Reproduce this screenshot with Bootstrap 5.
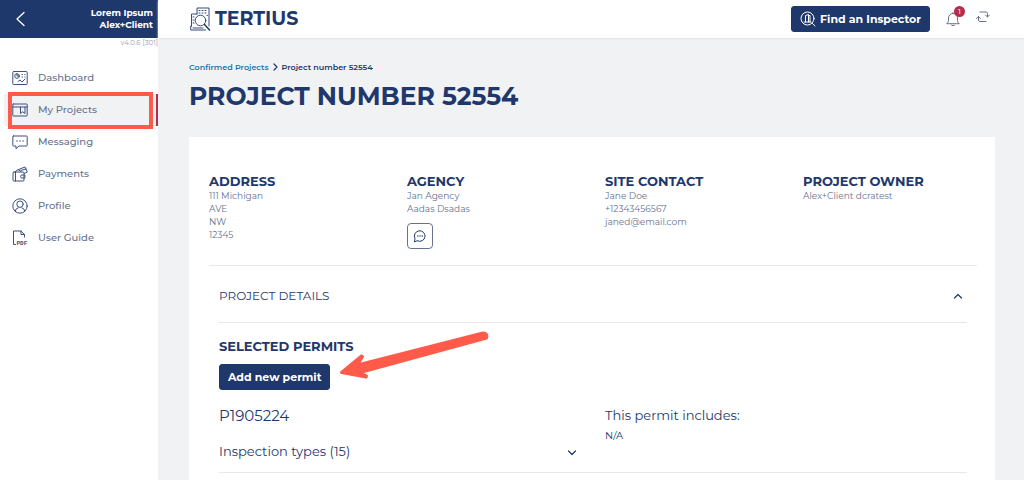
<!DOCTYPE html>
<html lang="en">
<head>
<meta charset="utf-8">
<meta name="viewport" content="width=device-width, initial-scale=1">
<title>Tertius - Project number 52554</title>
<link href="https://cdn.jsdelivr.net/npm/bootstrap@5.3.0/dist/css/bootstrap.min.css" rel="stylesheet">
<style>
:root { --navy: #1f386b; --slate: #66728f; --line: #e6e8eb; --coral: #ff5a4a; --canvas: #f1f2f4; }
body { font-family: Montserrat, Inter, sans-serif; color: var(--navy); background: var(--canvas); font-size: 12px; line-height: 16px; }
svg { fill: none; stroke: currentColor; stroke-linecap: round; stroke-linejoin: round; display: block; flex-shrink: 0; }
svg text { stroke: none; fill: currentColor; }
.sidebar { width: 158px; flex-shrink: 0; }
.account { background: var(--navy); height: 38px; font-size: 9px; line-height: 12px; font-weight: 700; padding: 0 5px 0 14px; }
.account button, .plain { background: none; border: 0; padding: 0; color: inherit; }
.version { font-size: 7px; line-height: 10px; color: #98a1b5; }
.menu { padding-top: 14px; }
.menu .nav-link { display: flex; align-items: center; gap: 10px; height: 32px; margin-left: 4px; padding: 0 0 0 8px; font-size: 10px; font-weight: 500; color: var(--slate); }
.menu svg { color: #3b5180; }
.menu .active { background: var(--canvas); border-right: 2px solid #b92b4b; position: relative; }
.callout-box { position: absolute; inset: -2px 3px -3px 4px; border: 4px solid var(--coral); }
.topbar { height: 38px; padding: 0 34px 0 32px; box-shadow: 0 1px 2px #dfe2e5; }
.brand { font-size: 19px; line-height: 24px; font-weight: 700; color: var(--navy); }
.btn-navy { --bs-btn-bg: var(--navy); --bs-btn-color: #fff; --bs-btn-hover-bg: #162a54; --bs-btn-hover-color: #fff; --bs-btn-font-weight: 700; --bs-btn-font-size: 11px; --bs-btn-line-height: 16px; --bs-btn-padding-x: 8px; --bs-btn-padding-y: 4px; --bs-btn-border-radius: 3px; --bs-btn-border-color: var(--navy); }
.alerts { color: var(--slate); margin-left: 16px; }
.count { position: absolute; top: -5px; left: 8px; width: 11px; height: 11px; border-radius: 50%; background: #b92b4b; color: #fff; font-size: 8px; line-height: 11px; text-align: center; }
.page { padding: 23px 29px 0 31px; }
.crumbs { font-size: 8px; line-height: 12px; font-weight: 600; gap: 4px; }
.crumbs a { color: #1c75a8; }
h1 { font-size: 25px; line-height: 32px; font-weight: 700; margin: 7px 0 25px; }
.sheet { padding: 36px 18px 0 20px; }
h2 { font-size: 13px; line-height: 16px; font-weight: 700; margin: 0; }
.facts { font-size: 9px; line-height: 13px; color: var(--slate); min-height: 92px; }
.facts h2 { color: var(--navy); }
.chat-btn { width: 26px; height: 26px; border: 1px solid var(--slate); border-radius: 4px; color: var(--navy); background: #fff; }
.rule { border-top: 1px solid var(--line); }
.details { height: 56px; font-size: 12px; }
.inset { margin: 0 10px; }
.permits-head { padding-top: 15px; }
.add-permit { margin-top: 10px; }
.permit { padding-top: 16px; padding-bottom: 12px; }
.permit-side { padding-left: 22px; padding-right: 16px; }
.big { font-size: 15px; line-height: 20px; margin-bottom: 16px; }
.mid { font-size: 13px; line-height: 18px; }
.small-note { font-size: 10px; }
.arrow { position: absolute; left: 116px; top: -36px; color: var(--coral); }
</style>
</head>
<body>
<div class="d-flex min-vh-100">
  <aside class="sidebar bg-white">
    <div class="account d-flex align-items-center justify-content-between text-white text-end">
      <button type="button" aria-label="Collapse menu"><svg width="12" height="16" viewBox="0 0 12 16" stroke-width="1.3"><path d="M10 1.500 3 8l7 6.500"/></svg></button>
      <div>Lorem Ipsum<br>Alex+Client</div>
    </div>
    <div class="version text-end">v4.0.6 [301]</div>
    <nav class="menu nav flex-column flex-nowrap">
      <a class="nav-link" href="#"><svg width="16" height="16" viewBox="0 0 16 16"><rect x=".8" y="1.500" width="14.400" height="13" rx="1"/><circle cx="5" cy="6" r="2.300"/><path d="M5 3.700V6h2.300M10 4.500h.5M12.800 4.500h.2M10 7h.5M12.800 7h.2M6 11.500l2-1.500 2 2 3-3"/></svg>Dashboard</a>
      <a class="nav-link active" href="#"><svg width="16" height="16" viewBox="0 0 16 16"><rect x=".8" y="2" width="14.400" height="12" rx=".5"/><path d="M.8 5h14.400M8.500 5v6.500l2.200-1.700 2.300 1.700V5"/></svg>My Projects<span class="callout-box"></span></a>
      <a class="nav-link" href="#"><svg width="16" height="16" viewBox="0 0 16 16"><path d="M1.500 2h13q.7 0 .7.700v8.600q0 .7-.7.700H7l-3 2.700V12H1.500q-.7 0-.7-.7V2.700q0-.7.700-.7z"/><path d="M5 7h.1M8 7h.1M11 7h.1" stroke-width="1.300"/></svg>Messaging</a>
      <a class="nav-link" href="#"><svg width="16" height="16" viewBox="0 0 16 16"><path d="M2 6h9q1 0 1 1v7q0 1-1 1H2q-1 0-1-1V7q0-1 1-1zM3.500 6v9M12.500 9H10a1.500 1.500 0 0 0 0 3h2.500zM3.500 5.500 6 3.500l3 2M6.500 3.500 13 1l2.300 5-2.800 1.500M9 4.300l5-1.300"/></svg>Payments</a>
      <a class="nav-link" href="#"><svg width="16" height="16" viewBox="0 0 16 16"><circle cx="8" cy="8" r="7.200"/><circle cx="8" cy="6.200" r="3.200"/><path d="M3.200 13q0-2.300 3-3.200M12.800 13q0-2.300-3-3.200"/></svg>Profile</a>
      <a class="nav-link" href="#"><svg width="16" height="16" viewBox="0 0 16 16"><path d="M3.500 14.500h-2V1h7.500l3.500 3.500V7M9 1v3.500h3.500"/><text x="4.500" y="15" font-size="6" font-weight="700" font-family="Liberation Mono, monospace">PDF</text></svg>User Guide</a>
    </nav>
  </aside>

  <div class="flex-grow-1">
    <header class="topbar bg-white d-flex align-items-center">
      <a class="brand d-flex align-items-center gap-1 text-decoration-none me-auto" href="#">
        <svg width="21" height="24" viewBox="0 0 21 24" stroke="#8492b0" stroke-width=".9"><path d="M7 7V1h12v18M1.500 19V7H7M1.500 19H.7v4h15M9 3.500h1M12 3.500h1M15 3.500h1M9 6h1M12 6h1M15 6h1M17 8.500h.5M3 10h1M3 13h1M3 16h1M3 21h10"/><circle cx="10.500" cy="13.500" r="5.300" fill="#fff"/><path d="m14.500 17.500 5 5.500" stroke-width="1.500"/></svg>
        TERTIUS
      </a>
      <button type="button" class="btn btn-navy d-flex align-items-center gap-1">
        <svg width="16" height="16" viewBox="0 0 16 16"><circle cx="7.500" cy="7.500" r="6.500"/><path d="m12.500 12.500 2.500 2.500M4 11h7M5.500 11V4.500l3-1V11M8.500 4.500h1.500V11"/></svg>
        Find an Inspector
      </button>
      <button type="button" class="plain alerts position-relative" aria-label="Notifications">
        <svg width="14" height="16" viewBox="0 0 14 16"><path d="M1 12.500q1.500-1 1.500-3V7a4.500 4.500 0 0 1 9 0v2.500q0 2 1.500 3zM7 2.500V1.500M5.500 14.200q1.500 1.300 3 0"/></svg>
        <span class="count">1</span>
      </button>
      <button type="button" class="plain alerts pb-1" aria-label="Refresh"><svg width="14" height="14" viewBox="0 0 14 14"><path d="M4 2h6q1.500 0 1.500 1.500V7M9.500 5l2 2 2-2M10 11.500H4q-1.500 0-1.500-1.500V6.500M.5 8.500l2-2 2 2"/></svg></button>
    </header>

    <main class="page">
      <nav class="crumbs d-flex align-items-center" aria-label="Breadcrumb">
        <a class="text-decoration-none" href="#">Confirmed Projects</a>
        <svg width="5" height="8" viewBox="0 0 5 8" stroke-width="1.200"><path d="m1 1 3 3-3 3"/></svg>
        <span>Project number 52554</span>
      </nav>
      <h1>PROJECT NUMBER 52554</h1>

      <section class="sheet bg-white">
        <div class="row facts">
          <div class="col-3"><h2>ADDRESS</h2>111 Michigan<br>AVE<br>NW<br>12345</div>
          <div class="col-3"><h2>AGENCY</h2>Jan Agency<br>Aadas Dsadas
            <button type="button" class="chat-btn d-flex align-items-center justify-content-center mt-2 p-0" aria-label="Message agency"><svg width="14" height="14" viewBox="0 0 14 14"><path d="M1.500 12.500 2 9.500a5.300 5.300 0 1 1 2.500 2.400z"/><path d="M4.800 7h.1M7 7h.1M9.200 7h.1" stroke-width="1.300"/></svg></button>
          </div>
          <div class="col-3"><h2>SITE CONTACT</h2>Jane Doe<br>+12343456567<br>janed@email.com</div>
          <div class="col-3"><h2>PROJECT OWNER</h2>Alex+Client dcratest</div>
        </div>
        <div class="rule"></div>
        <div class="inset">
          <button type="button" class="plain details w-100 d-flex align-items-center justify-content-between pt-1">
            PROJECT DETAILS
            <svg class="me-1" width="10" height="8" viewBox="0 0 10 8" stroke-width="1.200"><path d="m1.500 6 3.500-3.500 3.500 3.500"/></svg>
          </button>
          <div class="rule permits-head"></div>
          <h2>SELECTED PERMITS</h2>
          <div class="add-permit position-relative d-inline-block">
            <button type="button" class="btn btn-navy d-block">Add new permit</button>
            <svg class="arrow" width="158" height="58" viewBox="0 0 158 58" stroke-width="3"><path d="M6.500 44.500 26.500 28l1 .5-5 8.500L148 5q5 0 3.500 5L25 44.500l6.500 3.500-.5 1z" fill="currentColor"/></svg>
          </div>
        </div>
        <div class="row permit">
          <div class="col-6 permit-side">
            <div class="big">P1905224</div>
            <button type="button" class="plain mid d-flex w-100 align-items-center justify-content-between">Inspection types (15)
              <svg class="mt-1" width="10" height="8" viewBox="0 0 10 8" stroke-width="1.200"><path d="m1.500 2 3.500 3.500 3.500-3.500"/></svg></button>
          </div>
          <div class="col-6"><div class="mid">This permit includes:</div><div class="pt-1 small-note">N/A</div></div>
        </div>
        <div class="inset rule pb-4"></div>
      </section>
    </main>
  </div>
</div>
<script src="https://cdn.jsdelivr.net/npm/bootstrap@5.3.0/dist/js/bootstrap.bundle.min.js"></script>
</body>
</html>
